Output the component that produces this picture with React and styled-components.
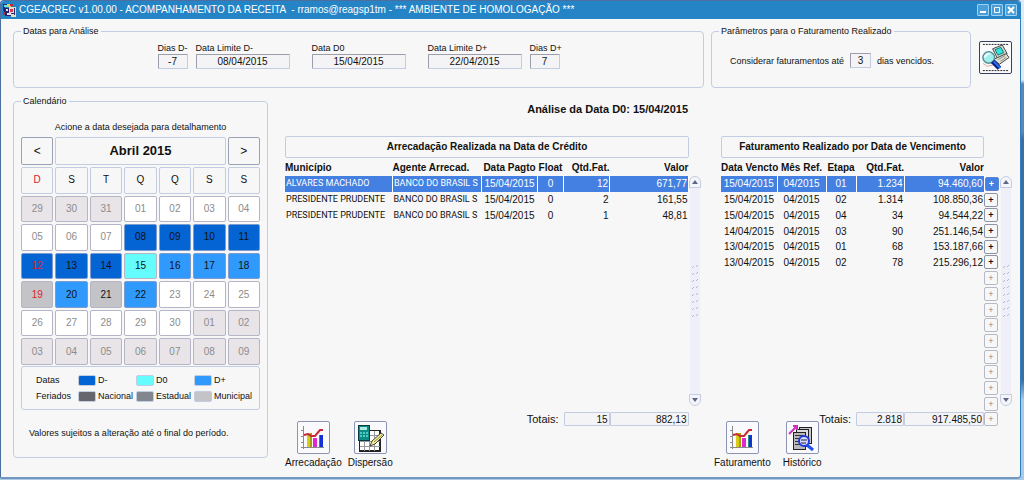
import React from 'react'
import styled, { createGlobalStyle, css } from 'styled-components'

const colors = {
  title: '#2484c6',
  surface: '#f7f7f7',
  line: '#c3cde2',
  text: '#111',
  muted: '#8c8c8c',
  red: '#e0202c',
  selected: '#4380e2',
  before: '#0464d4',
  d0: '#64fcfc',
  after: '#309afc',
  national: '#66666e',
  state: '#82868e',
  city: '#c4c4c8',
  outside: '#e8e4e8',
}

const GlobalStyle = createGlobalStyle`
  * {
    box-sizing: border-box;
  }

  body {
    margin: 0;
    background: #dbe8f4;
    color: ${colors.text};
    font: 10px/12px 'Liberation Sans', Arial, sans-serif;
  }

  button,
  input {
    font: inherit;
    color: inherit;
    margin: 0;
    padding: 0;
  }
`

const Desktop = styled.div`
  min-height: 100vh;
  display: flex;
  padding: 0 3px 1px 0;
  background: linear-gradient(#dcebf7 0 80px, #5b86b8 84px 132px, #3e6ca4 140px 380px, #a9cbe8 400px);
`

const Window = styled.main`
  flex: 1;
  min-width: 0;
  border: 1px solid #4c6f9f;
  border-right: 1px solid #2f7fbd;
  border-bottom: 2px solid #7397bd;
  border-radius: 4px 4px 4px 2px;
  background: ${colors.surface};
  overflow: hidden;
`

const TitleBar = styled.header`
  height: 18px;
  display: flex;
  align-items: center;
  gap: 2px;
  padding: 0 3px 0 1px;
  background: ${colors.title};
  color: #fff;
`

const Title = styled.h1`
  flex: 1;
  margin: 0;
  font-size: 10px;
  line-height: 18px;
  font-weight: normal;
  white-space: pre;
`

const WindowButton = styled.button`
  width: 12px;
  height: 12px;
  border: 1px solid #9fd2f2;
  border-radius: 1px;
  background: #4b9fd8;
  display: grid;
  place-items: center;
`

const Body = styled.div`
  padding: 6px 8px 8px 12px;
`

const TopRow = styled.div`
  display: flex;
  align-items: stretch;
  gap: 7px;
`

const MainRow = styled.div`
  display: flex;
  align-items: flex-start;
  gap: 17px;
  margin-top: 7px;
`

const Group = styled.fieldset`
  min-width: 0;
  margin: 0;
  padding: 0 7px;
  border: 1px solid ${colors.line};
  border-radius: 4px;
  font-size: 9px;
`

const DatesGroup = styled(Group)`
  flex: 1;
  height: 63px;
`

const ParamsGroup = styled(Group)`
  width: 260px;
`

const CalendarGroup = styled(Group)`
  width: 255px;
  flex: none;
  padding-bottom: 18px;
`

const Legend = styled.legend`
  padding: 0 2px;
  line-height: 12px;
`

const FieldRow = styled.div`
  display: flex;
  justify-content: center;
  gap: 22px;
  padding-top: 6px;
`

const FieldPair = styled.div`
  display: flex;
  gap: 8px;
`

const Field = styled.label`
  display: flex;
  flex-direction: column;
  width: ${({ $short }) => ($short ? 30 : 94)}px;
  line-height: 11px;
  white-space: nowrap;
`

const TextBox = styled.input`
  width: 100%;
  height: 15px;
  border: 1px solid #9c9eae;
  border-right-color: ${colors.line};
  border-bottom-color: ${colors.line};
  border-radius: 1px;
  background: #f4f4f6;
  font-size: 10px;
  text-align: center;
`

const OverdueRow = styled.label`
  display: flex;
  align-items: center;
  gap: 6px;
  padding: 16px 0 0 11px;

  input {
    width: 21px;
  }
`

const ToolButton = styled.button`
  width: 33px;
  height: 33px;
  display: grid;
  place-items: center;
  border: 1px solid ${({ $active }) => ($active ? '#33425e' : '#8b95b3')};
  border-radius: 2px;
  background: #fafafc;
`

const SearchSlot = styled.div`
  padding: 16px 0 0 1px;
`

const Hint = styled.p`
  margin: 14px 0 4px;
  text-align: center;
`

const CalendarGrid = styled.div`
  height: 228px;
  display: grid;
  grid-template-columns: repeat(7, 1fr);
  grid-template-rows: 28px repeat(7, 1fr);
  gap: 2px;
  font-size: 10px;
`

const cell = css`
  display: grid;
  place-items: center;
  border: 1px solid ${colors.line};
  border-radius: 2px;
  background: ${colors.surface};
`

const MonthName = styled.h2`
  ${cell}
  grid-column: span 5;
  margin: 0;
  font-size: 13px;
  line-height: 16px;
`

const Weekday = styled.span`
  ${cell}
  color: ${({ $sunday }) => ($sunday ? colors.red : colors.text)};
`

const MonthButton = styled.button`
  ${cell}
  border-color: #9aa2b6;
  font-size: 12px;
`

const dayBackground = {
  outside: colors.outside,
  plain: '#fff',
  before: colors.before,
  d0: colors.d0,
  after: colors.after,
  city: colors.city,
}

const Day = styled.button`
  ${cell}
  border-color: ${({ $kind }) => ($kind === 'before' || $kind === 'after' ? '#7c9cd0' : '#b4b6c8')};
  background: ${({ $kind }) => dayBackground[$kind]};
  color: ${({ $kind }) => ($kind === 'outside' || $kind === 'plain' ? colors.muted : colors.text)};

  ${({ $sunday, $kind }) => $sunday && $kind !== 'plain' && $kind !== 'outside' && css`
    color: ${colors.red};
  `}
`

const Key = styled.dl`
  display: grid;
  grid-template-columns: 42px 58px 58px 1fr;
  row-gap: 4px;
  margin: 1px 0 0;
  padding: 7px 0 7px 14px;
  border: 1px solid ${colors.line};
  border-radius: 3px;
  white-space: nowrap;

  dt,
  dd {
    margin: 0;
  }
`

const KeyItem = styled.dd`
  display: flex;
  align-items: center;
  gap: 2px;

  &::before {
    content: '';
    width: 16px;
    height: 9px;
    border: 1px solid ${colors.line};
    border-radius: 2px;
    background: ${({ $color }) => $color};
  }
`

const Note = styled.p`
  margin: 17px 0 0 8px;
`

const Results = styled.section`
  flex: 1;
  min-width: 0;
  display: grid;
  grid-template-columns: minmax(0, 1fr) 298px;
  column-gap: 13px;
`

const ResultsTitle = styled.h2`
  grid-column: 1;
  margin: 7px 13px 20px 0;
  font-size: 11px;
  line-height: 14px;
  text-align: right;
`

const Panel = styled.section`
  grid-row: 2;
  min-width: 0;
`

const PanelBody = styled.div`
  display: grid;
  grid-template-columns: minmax(0, 1fr) 12px;
  column-gap: ${({ $inset }) => ($inset ? 1 : 0)}px;
  padding-left: ${({ $inset }) => ($inset ? 7 : 0)}px;
`

const PanelTitle = styled.h3`
  margin: 0 ${({ $inset }) => ($inset ? 15 : 0)}px 0 0;
  border: 1px solid ${colors.line};
  border-radius: 2px;
  font-size: 10px;
  line-height: 20px;
  text-align: center;
`

const Table = styled.table`
  grid-row: 2;
  width: 100%;
  height: 268px;
  table-layout: fixed;
  border-collapse: collapse;
  line-height: 13px;
  white-space: nowrap;

  thead tr {
    height: 18px;
  }

  tbody tr {
    height: 15px;
  }
`

const Cell = styled.td`
  padding: 0 1px;
  overflow: hidden;
  text-align: ${({ $align }) => $align || 'left'};

  ${({ $name }) => $name && css`
    font-family: Roboto, 'Liberation Sans', sans-serif;
    font-size: 9px;
  `}

  ${({ $selected }) => $selected && css`
    background: ${colors.selected};
    background-clip: padding-box;
    border-right: 1px solid #fff;
    color: #fff;
  `}
`

const HeadCell = styled.th`
  padding: 0;
  text-align: ${({ $align }) => $align || 'left'};
`

const ButtonCell = styled.td`
  padding: 0;
`

const DetailButton = styled.button`
  width: 14px;
  height: 14px;
  display: block;
  border: 1px solid ${({ $selected }) => ($selected ? '#5b86cf' : '#8d94a8')};
  border-radius: 2px;
  background: ${({ $selected }) => ($selected ? colors.selected : colors.surface)};
  color: ${({ $selected }) => ($selected ? '#fff' : '#111')};
  font-size: 9px;
  line-height: 12px;
  font-weight: bold;

  &:disabled {
    border-color: #b6b9c6;
    color: #888;
    font-weight: normal;
  }
`

const TotalLabel = styled.th`
  padding: 0 5px 0 0;
  font-size: 11px;
  font-weight: normal;
  text-align: right;
`

const TotalCell = styled.td`
  padding: 0;

  input {
    height: 14px;
    display: block;
    padding-right: 1px;
    border-color: ${colors.line};
    text-align: right;
  }
`

const Scroll = styled.div`
  grid-row: 2;
  height: 230px;
  margin-top: 18px;
  display: flex;
  flex-direction: column;
  align-items: center;
`

const ScrollTrack = styled.div`
  flex: 1;
  width: 10px;
  display: grid;
  place-items: center;
  background: #eeeff8;
`

const ScrollButton = styled.button`
  width: 12px;
  height: 12px;
  display: grid;
  place-items: center;
  border: 1px solid ${colors.line};
  border-radius: ${({ $up }) => ($up ? '6px 6px 0 0' : '0 0 6px 6px')};
  background: #f4f5fb;
`

const Actions = styled.div`
  display: flex;
  gap: ${({ $wide }) => ($wide ? 12 : 6)}px;
  margin-top: -5px;
`

const Action = styled.label`
  display: flex;
  flex-direction: column;
  align-items: center;
  gap: 3px;
`

const AppIcon = () => (
  <svg width="15" height="16" viewBox="0 0 15 16" shapeRendering="crispEdges" aria-hidden="true">
    <path d="M1 2h5v3H3v4H1z" fill="#123a6e" />
    <path d="M2 3h3v2H2z" fill="#6fe0e8" />
    <path d="M5 2h4v3H5z" fill="#d8d070" />
    <path d="M8 2h3v2H8z" fill="#c02838" />
    <path d="M2 6h9v8H3z" fill="#26246c" />
    <path d="M4 7h2v2H4zM5 11h4v2H5z" fill="#e4e4f4" />
    <path d="M7 5h7v10H9v-4H7z" fill="#e6dcc0" />
    <path d="M8 7h3v3H8z" fill="#d83850" />
    <path d="M12 6h1v7h-1zM9 11h3v1H9z" fill="#2c2c74" />
    <path d="M1 10h2v3H1z" fill="#9a3050" />
  </svg>
)

const SearchIcon = () => (
  <svg width="31" height="31" viewBox="0 0 32 32" aria-hidden="true">
    <path d="M3 2.500h26M3 29.500h26" stroke="#222" strokeDasharray="2 1" />
    <path d="M13 7l10-4 5 9-10 5z" fill="#d4d4cc" stroke="#444" />
    <path d="M15.500 8l6-2.500 3 5.500-6 2.500z" fill="#34e4dc" stroke="#147878" />
    <path d="M14 18l13-6 3 4-10 7z" fill="#e0e0d0" stroke="#444" />
    <path d="M19 18l7-4M21 20l6-4" stroke="#888" />
    <circle cx="9" cy="16" r="6" fill="#9ff0ec" stroke="#5a8f98" strokeWidth="1.500" />
    <path d="M5 16q1-4 5-4" stroke="#fff" strokeWidth="2" fill="none" />
    <path d="M13 20l7 7" stroke="#0b1c8c" strokeWidth="5" />
    <path d="M14 20l7 7" stroke="#2478e8" strokeWidth="2" />
    <path d="M3 22l4 3 6-1" stroke="#e0a890" fill="none" />
  </svg>
)

const ChartIcon = () => (
  <svg width="26" height="26" viewBox="0 0 26 26" shapeRendering="crispEdges" aria-hidden="true">
    <path d="M3.500 1v23M1 22.500h23M1 5.500h3M1 11.500h3M1 17.500h3" stroke="#8a8a8a" fill="none" />
    <path d="M7 8h4v14H7z" fill="#d8cc18" />
    <path d="M10 8h2v14h-2z" fill="#a89c10" />
    <path d="M13 13h4v9h-4z" fill="#e028d0" />
    <path d="M20 10h3v12h-3z" fill="#1430d8" />
    <path d="M19 10h1v12h-1z" fill="#209088" />
    <path d="M4 10l4-1 3 2h4l5-6h3" stroke="#c82838" strokeWidth="2" fill="none" shapeRendering="auto" />
  </svg>
)

const SpreadIcon = () => (
  <svg width="30" height="30" viewBox="0 0 30 30" aria-hidden="true">
    <g shapeRendering="crispEdges">
      <path d="M4.500 7.500h21v21h-21z" fill="#fff" stroke="#222" />
      <path d="M5 28h21M25 8v20" stroke="#222" strokeWidth="2" />
      <path d="M5 18.500h20M5 23.500h20M9.500 17v11M14.500 8v20M19.500 8v20M15 12.500h10" stroke="#999" />
      <path d="M3 2h11v15H3z" fill="#0c8c84" stroke="#063c40" />
      <path d="M5 4h7v3H5z" fill="#a8ece4" />
      <path d="M5 9h2v2H5zM8 9h2v2H8zM11 9h2v2h-2zM5 12h2v2H5zM8 12h2v2H8zM11 12h2v2h-2z" fill="#50c8c0" />
    </g>
    <path d="M15 23l2-5 9-8 3 2-9 9z" fill="#f0ec98" stroke="#444" />
    <path d="M19 19l8-7" stroke="#989040" />
  </svg>
)

const HistoryIcon = () => (
  <svg width="28" height="28" viewBox="0 0 28 28" aria-hidden="true">
    <g shapeRendering="crispEdges">
      <path d="M11 3h12v16H11z" fill="#c8c8c8" stroke="#222" />
      <path d="M8 5h12v17H8z" fill="#ddd" stroke="#222" />
      <path d="M5 8h12v17H5z" fill="#b8b8b8" stroke="#222" />
      <path d="M7 11h8M7 14h8M7 17h6M7 20h6" stroke="#333" />
    </g>
    <path d="M1 10l8-8M5 2h4v4" stroke="#d030b8" strokeWidth="2" fill="none" />
    <circle cx="16" cy="17" r="5" fill="#d4dcff" stroke="#2038e0" strokeWidth="2" />
    <path d="M13 16h6M13 19h5" stroke="#222" />
    <path d="M19 21l6 5" stroke="#2050f0" strokeWidth="3" />
  </svg>
)

const Grip = () => (
  <svg width="10" height="54" viewBox="0 0 10 54" aria-hidden="true">
    {[0, 7, 14, 21, 28, 35, 42, 49].map(y => (
      <path key={y} d={`M2 ${y + 4}l2-2M6 ${y + 3}l2-2`} stroke="#b4b8d8" />
    ))}
  </svg>
)

const Arrow = ({ up }) => (
  <svg width="6" height="4" viewBox="0 0 6 4" aria-hidden="true">
    <path d={up ? 'M0 4l3-4 3 4z' : 'M0 0h6l-3 4z'} fill="#5f6684" />
  </svg>
)

const ScrollBar = () => (
  <Scroll>
    <ScrollButton $up type="button" aria-label="Subir"><Arrow up /></ScrollButton>
    <ScrollTrack><Grip /></ScrollTrack>
    <ScrollButton type="button" aria-label="Descer"><Arrow /></ScrollButton>
  </Scroll>
)

const DateField = ({ label, value, short }) => (
  <Field $short={short}>
    {label}
    <TextBox readOnly value={value} />
  </Field>
)

const days = [
  ['29', 'outside'], ['30', 'outside'], ['31', 'outside'], ['01', 'plain'], ['02', 'plain'], ['03', 'plain'], ['04', 'plain'],
  ['05', 'plain'], ['06', 'plain'], ['07', 'plain'], ['08', 'before'], ['09', 'before'], ['10', 'before'], ['11', 'before'],
  ['12', 'before'], ['13', 'before'], ['14', 'before'], ['15', 'd0'], ['16', 'after'], ['17', 'after'], ['18', 'after'],
  ['19', 'city'], ['20', 'after'], ['21', 'city'], ['22', 'after'], ['23', 'plain'], ['24', 'plain'], ['25', 'plain'],
  ['26', 'plain'], ['27', 'plain'], ['28', 'plain'], ['29', 'plain'], ['30', 'plain'], ['01', 'outside'], ['02', 'outside'],
  ['03', 'outside'], ['04', 'outside'], ['05', 'outside'], ['06', 'outside'], ['07', 'outside'], ['08', 'outside'], ['09', 'outside'],
]

const collectionColumns = [
  { title: 'Município', name: true },
  { title: 'Agente Arrecad.', width: 89, name: true },
  { title: 'Data Pagto', width: 56, align: 'center' },
  { title: 'Float', width: 26, align: 'center' },
  { title: 'Qtd.Fat.', width: 46, align: 'right' },
  { title: 'Valor', width: 79, align: 'right' },
]

const collectionRows = [
  ['ALVARES MACHADO', 'BANCO DO BRASIL S', '15/04/2015', '0', '12', '671,77'],
  ['PRESIDENTE PRUDENTE', 'BANCO DO BRASIL S', '15/04/2015', '0', '2', '161,55'],
  ['PRESIDENTE PRUDENTE', 'BANCO DO BRASIL S', '15/04/2015', '0', '1', '48,81'],
]

const billingColumns = [
  { title: 'Data Vencto', align: 'center' },
  { title: 'Mês Ref.', width: 49, align: 'center' },
  { title: 'Etapa', width: 30, align: 'center' },
  { title: 'Qtd.Fat.', width: 48, align: 'right' },
  { title: 'Valor', width: 80, align: 'right' },
]

const billingRows = [
  ['15/04/2015', '04/2015', '01', '1.234', '94.460,60'],
  ['15/04/2015', '04/2015', '02', '1.314', '108.850,36'],
  ['15/04/2015', '04/2015', '04', '34', '94.544,22'],
  ['14/04/2015', '04/2015', '03', '90', '251.146,54'],
  ['13/04/2015', '04/2015', '01', '68', '153.187,66'],
  ['13/04/2015', '04/2015', '02', '78', '215.296,12'],
]

const VISIBLE_ROWS = 15

const DataTable = ({ columns, rows, totals, detail }) => (
  <Table>
    <colgroup>
      {columns.map(({ title, width }) => <col key={title} width={width} />)}
      {detail && <col width="15" />}
    </colgroup>
    <thead>
      <tr>
        {columns.map(({ title, align }) => <HeadCell key={title} $align={align}>{title}</HeadCell>)}
        {detail && <ButtonCell />}
      </tr>
    </thead>
    <tbody>
      {Array.from({ length: VISIBLE_ROWS }, (_, i) => (
        <tr key={i}>
          {columns.map(({ title, align, name }, j) => (
            <Cell key={title} $align={align} $name={name} $selected={i === 0}>
              {rows[i] ? rows[i][j] : '\u00a0'}
            </Cell>
          ))}
          {detail && (
            <ButtonCell>
              <DetailButton type="button" aria-label="Detalhar" $selected={i === 0} disabled={!rows[i]}>+</DetailButton>
            </ButtonCell>
          )}
        </tr>
      ))}
    </tbody>
    <tfoot>
      <tr>
        <TotalLabel colSpan={columns.length - 2}>Totais:</TotalLabel>
        <TotalCell><TextBox readOnly aria-label="Total de faturas" value={totals[0]} /></TotalCell>
        <TotalCell><TextBox readOnly aria-label="Valor total" value={totals[1]} /></TotalCell>
        {detail && <ButtonCell><DetailButton type="button" aria-label="Detalhar" disabled>+</DetailButton></ButtonCell>}
      </tr>
    </tfoot>
  </Table>
)

const IconAction = ({ label, children }) => (
  <Action>
    <ToolButton type="button">{children}</ToolButton>
    {label}
  </Action>
)

const Calendar = () => (
  <CalendarGroup>
    <Legend>Calendário</Legend>
    <Hint>Acione a data desejada para detalhamento</Hint>
    <CalendarGrid>
      <MonthButton type="button">&lt;</MonthButton>
      <MonthName>Abril 2015</MonthName>
      <MonthButton type="button">&gt;</MonthButton>
      {['D', 'S', 'T', 'Q', 'Q', 'S', 'S'].map((day, i) => <Weekday key={i} $sunday={i === 0}>{day}</Weekday>)}
      {days.map(([day, kind], i) => (
        <Day key={i} type="button" $kind={kind} $sunday={i % 7 === 0}>{day}</Day>
      ))}
    </CalendarGrid>
    <Key>
      <dt>Datas</dt>
      <KeyItem $color={colors.before}>D-</KeyItem>
      <KeyItem $color={colors.d0}>D0</KeyItem>
      <KeyItem $color={colors.after}>D+</KeyItem>
      <dt>Feriados</dt>
      <KeyItem $color={colors.national}>Nacional</KeyItem>
      <KeyItem $color={colors.state}>Estadual</KeyItem>
      <KeyItem $color={colors.city}>Municipal</KeyItem>
    </Key>
    <Note>Valores sujeitos a alteração até o final do período.</Note>
  </CalendarGroup>
)

const App = () => (
  <Desktop>
    <GlobalStyle />
    <Window>
      <TitleBar>
        <AppIcon />
        <Title>CGEACREC v1.00.00 - ACOMPANHAMENTO DA RECEITA  - rramos@reagsp1tm - *** AMBIENTE DE HOMOLOGAÇÃO ***</Title>
        <WindowButton type="button" aria-label="Minimizar">
          <svg width="8" height="8"><path d="M1 6h6" stroke="#fff" strokeWidth="2" /></svg>
        </WindowButton>
        <WindowButton type="button" aria-label="Maximizar">
          <svg width="8" height="8"><path d="M1.500 1.500h5v5h-5z" stroke="#fff" fill="none" /></svg>
        </WindowButton>
        <WindowButton type="button" aria-label="Fechar">
          <svg width="8" height="8"><path d="M1 1l6 6M7 1l-6 6" stroke="#fff" strokeWidth="2" /></svg>
        </WindowButton>
      </TitleBar>
      <Body>
        <TopRow>
          <DatesGroup>
            <Legend>Datas para Análise</Legend>
            <FieldRow>
              <FieldPair>
                <DateField label="Dias D-" value="-7" short />
                <DateField label="Data Limite D-" value="08/04/2015" />
              </FieldPair>
              <DateField label="Data D0" value="15/04/2015" />
              <FieldPair>
                <DateField label="Data Limite D+" value="22/04/2015" />
                <DateField label="Dias D+" value="7" short />
              </FieldPair>
            </FieldRow>
          </DatesGroup>
          <ParamsGroup>
            <Legend>Parâmetros para o Faturamento Realizado</Legend>
            <OverdueRow>
              Considerar faturamentos até
              <TextBox readOnly value="3" />
              dias vencidos.
            </OverdueRow>
          </ParamsGroup>
          <SearchSlot>
            <ToolButton $active type="button" aria-label="Consultar"><SearchIcon /></ToolButton>
          </SearchSlot>
        </TopRow>
        <MainRow>
          <Calendar />
          <Results>
            <ResultsTitle>Análise da Data D0: 15/04/2015</ResultsTitle>
            <Panel>
              <PanelBody>
                <PanelTitle>Arrecadação Realizada na Data de Crédito</PanelTitle>
                <DataTable columns={collectionColumns} rows={collectionRows} totals={['15', '882,13']} />
                <ScrollBar />
              </PanelBody>
              <Actions>
                <IconAction label="Arrecadação"><ChartIcon /></IconAction>
                <IconAction label="Dispersão"><SpreadIcon /></IconAction>
              </Actions>
            </Panel>
            <Panel>
              <PanelBody $inset>
                <PanelTitle $inset>Faturamento Realizado por Data de Vencimento</PanelTitle>
                <DataTable columns={billingColumns} rows={billingRows} totals={['2.818', '917.485,50']} detail />
                <ScrollBar />
              </PanelBody>
              <Actions $wide>
                <IconAction label="Faturamento"><ChartIcon /></IconAction>
                <IconAction label="Histórico"><HistoryIcon /></IconAction>
              </Actions>
            </Panel>
          </Results>
        </MainRow>
      </Body>
    </Window>
  </Desktop>
)

export default App
